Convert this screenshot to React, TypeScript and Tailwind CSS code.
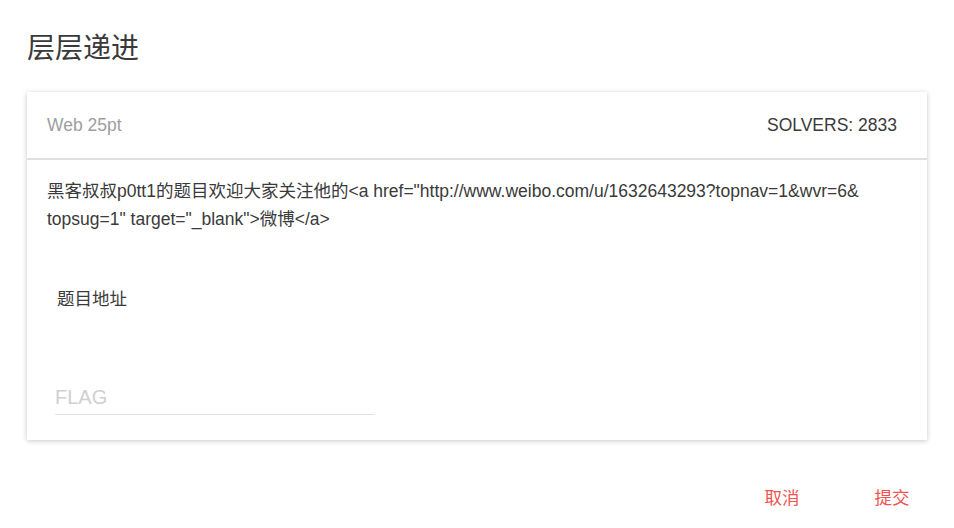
import React from 'react';

const font = { fontFamily: '"Liberation Sans", "Noto Sans CJK SC", sans-serif' };

const App: React.FC = () => {
  return (
    <div className="min-h-[528px] bg-white px-[27px] pt-[30px] text-[#3a3a3a]" style={font}>
      <h1 className="text-[28px] leading-[38px] font-normal text-[#3a3a3a] mb-[24px]">层层递进</h1>

      <div className="bg-white shadow-[0_1px_5px_rgba(0,0,0,0.22)]">
        <div className="h-[68px] flex items-center justify-between pl-[20px] pr-[30px] border-b-2 border-[#e0e0e0]">
          <span className="text-[17.5px] text-[#9e9e9e]">Web 25pt</span>
          <span className="text-[17.5px] text-[#3a3a3a]">SOLVERS: 2833</span>
        </div>

        <div className="px-[20px] pt-[17px] pb-[25px]">
          <p className="text-[17.5px] leading-[28px] text-[#3a3a3a]">
            黑客叔叔p0tt1的题目欢迎大家关注他的&lt;a href="http://www.weibo.com/u/1632643293?topnav=1&amp;wvr=6&amp;
            <br />
            topsug=1" target="_blank"&gt;微博&lt;/a&gt;
          </p>

          <div className="mt-[52px] pl-[10px]">
            <a className="text-[17.5px] leading-[28px] text-[#3a3a3a]">题目地址</a>
          </div>

          <div className="mt-[68px] pl-[8px]">
            <input
              placeholder="FLAG"
              className="w-[320px] h-[34px] text-[20px] border-b border-[#e0e0e0] outline-none placeholder:text-[#d0d0d0] bg-transparent"
              style={font}
            />
          </div>
        </div>
      </div>

      <div className="flex justify-end gap-[22px] mt-[40px] -mr-[9px]">
        <button className="w-[88px] h-[36px] text-[17.5px] text-[#ef5350]">取消</button>
        <button className="w-[88px] h-[36px] text-[17.5px] text-[#ef5350]">提交</button>
      </div>
    </div>
  );
};

export default App;
